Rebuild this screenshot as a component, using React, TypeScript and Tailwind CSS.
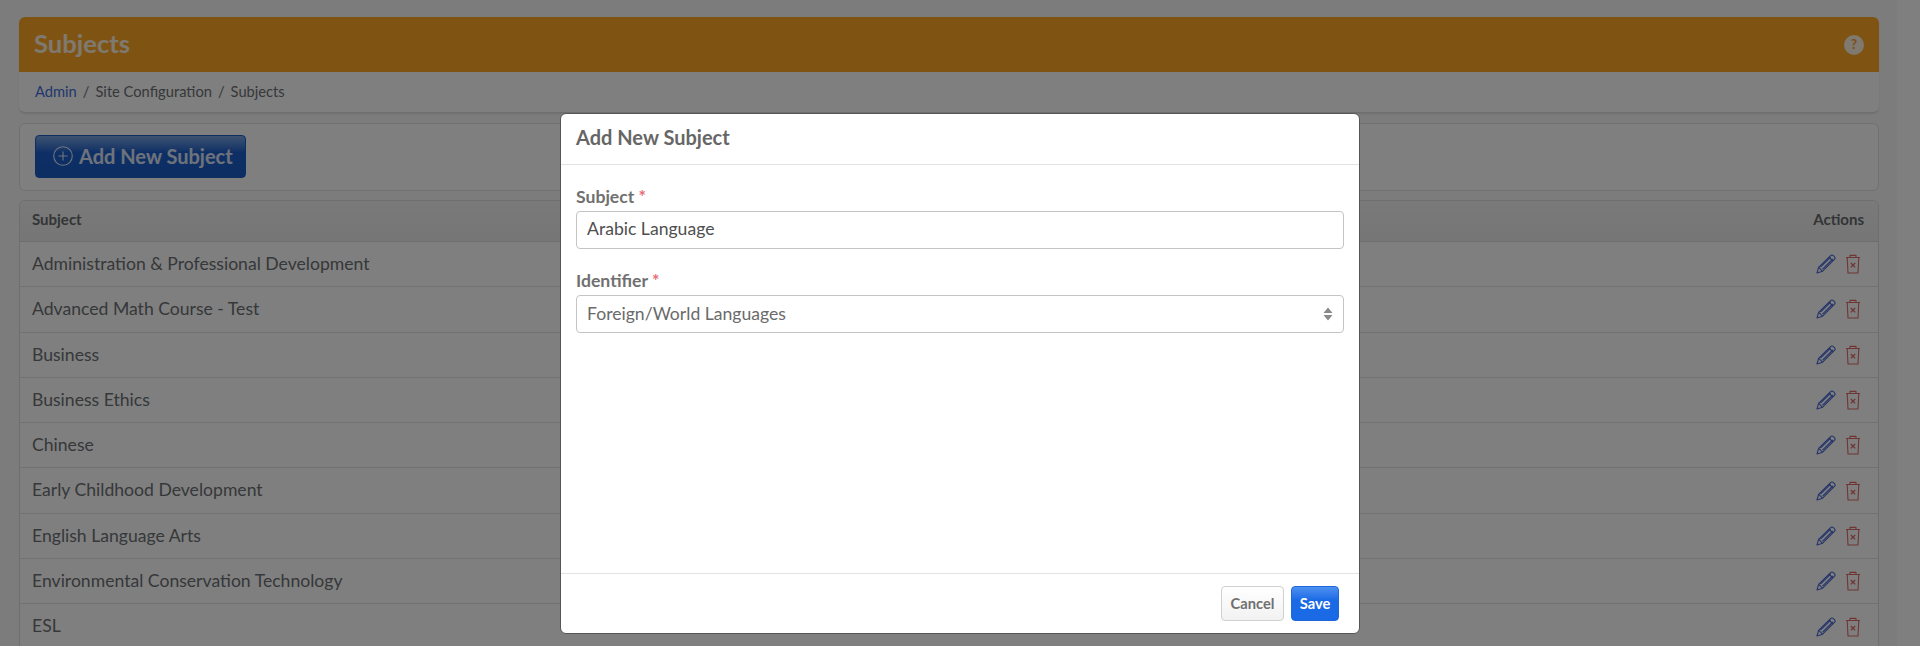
import React from "react";

const rows = [
  "Administration & Professional Development",
  "Advanced Math Course - Test",
  "Business",
  "Business Ethics",
  "Chinese",
  "Early Childhood Development",
  "English Language Arts",
  "Environmental Conservation Technology",
  "ESL",
];

function Pencil() {
  return (
    <svg width="20" height="20" viewBox="0 0 20 20" fill="none" stroke="#4a68d4" strokeWidth="1.1" strokeLinejoin="round">
      <path d="M1 19l1.6-5.6L14.6 1.6c.8-.8 2-.8 2.8 0l1 1c.8.8.8 2 0 2.8L6.6 17.2 1 19z" />
      <path d="M2.6 13.4l4 3.8M13 3.2l3.8 3.8M4.4 13.2L14.6 3M6.6 15.2L16.8 5" />
    </svg>
  );
}

function Trash() {
  return (
    <svg width="16" height="20" viewBox="0 0 16 20" fill="none" stroke="#e06a68" strokeWidth="1.1" strokeLinejoin="round">
      <path d="M1 3.5h14M5 3.5V1.4h6v2.1M2.2 3.5l.8 15.5h10l.8-15.5" />
      <path d="M5.8 9l4.4 4.4M10.2 9l-4.4 4.4" strokeWidth="1.3" />
    </svg>
  );
}

function Updown() {
  return (
    <svg width="10" height="14" viewBox="0 0 10 14" fill="#8a8a8a">
      <path d="M5 0.5L9.5 6H0.5zM5 13.5L0.5 8h9z" />
    </svg>
  );
}

export default function App() {
  return (
    <div className="relative flex h-[646px] overflow-hidden bg-[#f8f9f9] font-['Lato','Open_Sans',sans-serif] text-[#212529]">
      <div className="flex min-w-0 flex-1 flex-col pl-[19px] pr-[18px] pt-[17px]">
        <div className="h-[96px] shrink-0 overflow-hidden rounded-[6px] border-b border-[#dcdcdc] bg-white shadow-[0_1px_2px_rgba(0,0,0,0.1)]">
          <div className="flex h-[55px] items-center justify-between bg-[#ffa826] pl-[15px] pr-[15px]">
            <span className="-translate-y-[1px] text-[25.6px] font-bold text-white/85">Subjects</span>
            <span className="flex h-5 w-5 items-center justify-center rounded-full bg-white/85 text-[13px] font-bold text-[#f0a030]">?</span>
          </div>
          <div className="flex h-[39px] items-center gap-[6px] pl-[16px] text-[14.7px] text-[#6c7074]">
            <span className="text-[#3f6fdc]">Admin</span>
            <span>/</span>
            <span>Site Configuration</span>
            <span>/</span>
            <span>Subjects</span>
          </div>
        </div>
        <div className="mt-[10px] flex h-[68px] shrink-0 items-center rounded-[6px] border border-[#e0e0e0] bg-white pl-[15px]">
          <div className="flex h-[43px] w-[211px] -translate-y-[1px] items-center gap-[6px] rounded-[4px] border border-[#1a5cc0] bg-gradient-to-b from-[#7aa5e0] via-[#1d5fcb] via-40% to-[#1a5cc6] pl-[17px] text-[20px] font-bold text-white/85">
            <svg width="20" height="20" viewBox="0 0 20 20" fill="none" stroke="currentColor" strokeWidth="1.1">
              <circle cx="10" cy="10" r="9.3" />
              <path d="M10 5.5v9M5.5 10h9" />
            </svg>
            <span>Add New Subject</span>
          </div>
        </div>
        <div className="mt-[9px] shrink-0 overflow-hidden rounded-t-[6px] border-x border-t border-[#dcdcdc] bg-white">
          <div className="flex h-[41px] items-center justify-between border-b border-[#dcdcdc] bg-gradient-to-b from-[#f4f4f4] to-[#ececec] pl-[12px] pr-[14px] text-[15px] font-bold text-[#666a6e]">
            <span className="-translate-y-[2px]">Subject</span>
            <span className="-translate-y-[2px]">Actions</span>
          </div>
          {rows.map((r) => (
            <div key={r} className="flex h-[45.3px] items-center justify-between border-b border-[#dee2e6] pl-[12px] pr-[17px] text-[17.6px] text-[#6c7074]">
              <span>{r}</span>
              <span className="flex items-center gap-[9px]">
                <Pencil />
                <Trash />
              </span>
            </div>
          ))}
        </div>
      </div>
      <div className="w-[23px] shrink-0 bg-white" />

      <div className="absolute inset-0 bg-black/50" />

      <div className="absolute left-[560px] top-[113px] flex h-[521px] w-[800px] flex-col rounded-[6px] border border-[#555] bg-white text-[#5a5a5a]">
        <div className="flex h-[51px] shrink-0 items-center border-b border-[#e3e3e3] pl-[15px] text-[20px] font-bold text-[#666]">
          <span className="-translate-y-[2px]">Add New Subject</span>
        </div>
        <div className="flex flex-1 flex-col px-[15px] pt-[22px]">
          <div className="text-[17.6px] font-bold leading-[20px] text-[#707070]">
            Subject <span className="text-[#e86a7a]">*</span>
          </div>
          <div className="mt-[4px] flex h-[38px] items-center rounded-[4px] border border-[#c4c4c4] pb-[1px] pl-[10px] text-[17.6px] text-[#4f4f4f]">
            Arabic Language
          </div>
          <div className="mt-[22px] text-[17.6px] font-bold leading-[20px] text-[#707070]">
            Identifier <span className="text-[#e86a7a]">*</span>
          </div>
          <div className="mt-[4px] flex h-[38px] items-center justify-between rounded-[4px] border border-[#c4c4c4] pl-[10px] pr-[10px] text-[17.6px] text-[#6a6a6a]">
            <span>Foreign/World Languages</span>
            <Updown />
          </div>
        </div>
        <div className="flex h-[60px] shrink-0 items-center justify-end gap-[7px] border-t border-[#e3e3e3] pr-[20px]">
          <div className="flex h-[35px] w-[63px] items-center justify-center rounded-[4px] border border-[#d0d0d0] bg-gradient-to-b from-white to-[#f2f2f2] text-[14.7px] font-bold text-[#707070]">
            Cancel
          </div>
          <div className="flex h-[35px] w-[48px] items-center justify-center rounded-[4px] border border-[#1d68d8] bg-gradient-to-b from-[#4d90f0] via-[#1a6ae6] via-40% to-[#1a6ae6] text-[14.7px] font-bold text-white">
            Save
          </div>
        </div>
      </div>
    </div>
  );
}
